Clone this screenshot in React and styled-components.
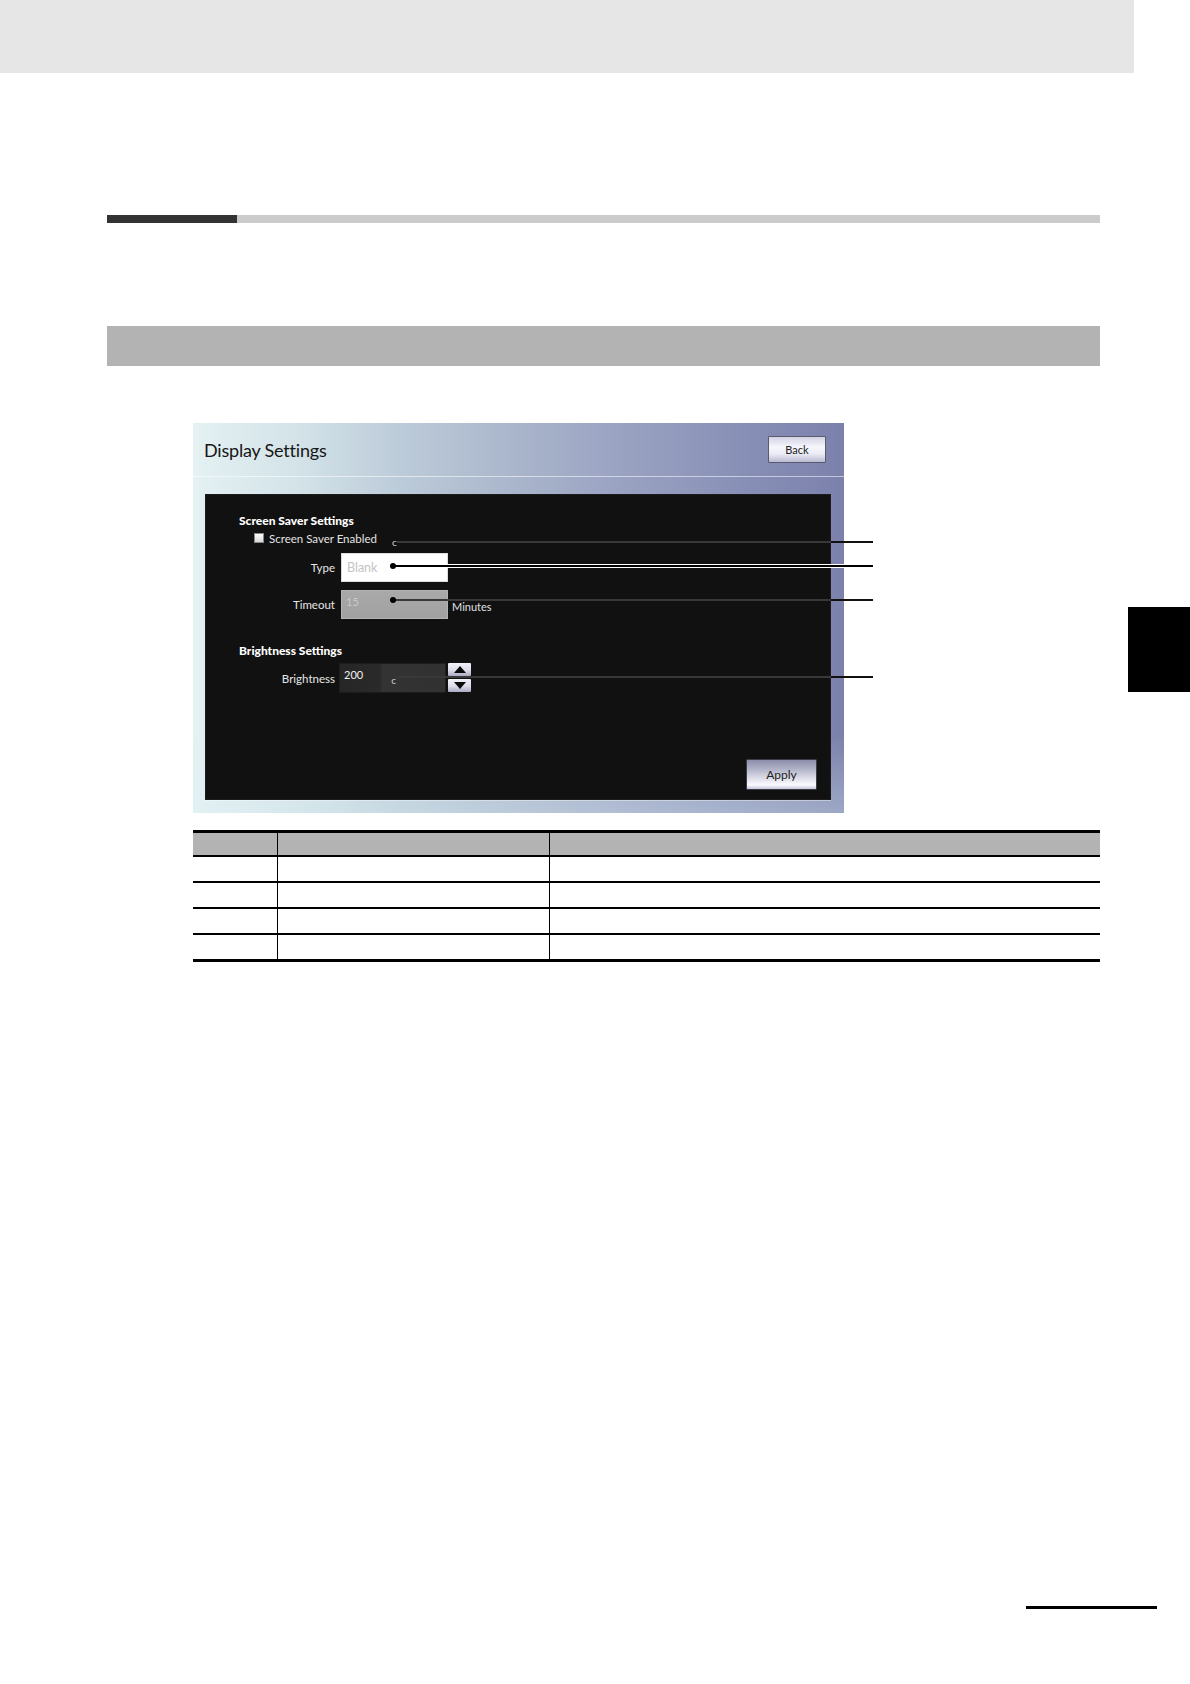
import styled, { createGlobalStyle } from 'styled-components';

const GlobalStyle = createGlobalStyle`
  html, body {
    margin: 0;
    padding: 0;
    background: #fff;
  }
  body {
    font-family: "Liberation Sans", Arial, sans-serif;
  }
`;

const Page = styled.div`
  position: relative;
  width: 1190px;
  min-height: 1684px;
  display: flex;
  flex-direction: column;
  background: #fff;
  overflow: hidden;
`;

const TopBand = styled.div`
  width: 1134px;
  height: 73px;
  background: #e6e6e6;
`;

const Content = styled.div`
  display: flex;
  flex-direction: column;
  padding: 0 90px 0 107px;
`;

const SectionRule = styled.div`
  display: flex;
  height: 8px;
  margin-top: 142px;
`;

const RuleDark = styled.div`
  width: 130px;
  background: #333;
`;

const RuleLight = styled.div`
  flex: 1;
  background: #cbcbcb;
`;

const SubBand = styled.div`
  height: 40px;
  margin-top: 103px;
  background: #b3b3b3;
`;

const ChapterTab = styled.div`
  position: absolute;
  right: 0;
  top: 607px;
  width: 62px;
  height: 85px;
  background: #000;
`;

const FooterRule = styled.div`
  align-self: flex-end;
  width: 131px;
  height: 3px;
  margin: auto 33px 75px 0;
  background: #000;
`;

/* ---------- the HMI screenshot ---------- */

const Shot = styled.div`
  position: relative;
  width: 651px;
  height: 390px;
  margin: 57px 0 0 86px;
  display: flex;
  flex-direction: column;
  font-family: Lato, "Open Sans", sans-serif;
  background:
    linear-gradient(180deg, rgba(255, 255, 255, 0) 80%, rgba(220, 240, 244, 0.35) 100%),
    linear-gradient(90deg, #e5f1f3 0%, #d3e3e8 16%, #bccbd9 32%, #a9b5cb 50%, #9aa2c2 66%, #8990b7 84%, #7b81ab 100%);
`;

const TitleBar = styled.div`
  height: 53px;
  display: flex;
  align-items: center;
  justify-content: space-between;
  padding: 0 18px 0 11px;
  border-bottom: 1px solid rgba(255, 255, 255, 0.55);
`;

const Title = styled.div`
  font-size: 18px;
  color: #161616;
  letter-spacing: -0.2px;
`;

const GlossButton = styled.div`
  width: ${(p) => p.$w}px;
  height: ${(p) => p.$h}px;
  box-sizing: border-box;
  display: flex;
  align-items: center;
  justify-content: center;
  font-size: ${(p) => p.$fs}px;
  color: #222;
  border: 1px solid ${(p) => (p.$dark ? '#3c3c48' : '#5a5a6e')};
  border-radius: 1px;
  background: ${(p) =>
    p.$dark
      ? 'linear-gradient(180deg, #8c8eaa 0%, #aeb0c6 30%, #dcdce8 62%, #fafaff 86%, #c4c4d8 100%)'
      : 'linear-gradient(180deg, #d2d2e4 0%, #f6f6fc 40%, #ebebf5 68%, #b9b9d3 100%)'};
`;

const Panel = styled.div`
  flex: 1;
  margin: 17px 13px 13px 12px;
  display: flex;
  flex-direction: column;
  padding: 19px 13px 9px 0;
  background: #111;
  border: 1px solid #1c1c1c;
  box-shadow: 0 1px 0 rgba(255, 255, 255, 0.4);
`;

const GroupTitle = styled.div`
  margin: ${(p) => p.$mt}px 0 0 33px;
  height: 14px;
  line-height: 14px;
  font-size: 12px;
  font-weight: 900;
  color: #fff;
`;

const CheckRow = styled.div`
  display: flex;
  align-items: center;
  height: 12px;
  margin: 4px 0 0 48px;
  font-size: 11.5px;
  color: #e4e4e4;
`;

const CheckBox = styled.span`
  width: 10px;
  height: 10px;
  margin-right: 5px;
  background: linear-gradient(180deg, #fff, #d8d8d8);
  border: 1px solid #888;
  box-sizing: border-box;
`;

const Marker = styled.span`
  font-size: 10px;
  color: #cfcfcf;
  margin-left: ${(p) => p.$ml}px;
  align-self: ${(p) => (p.$top ? 'flex-start' : 'flex-end')};
  margin-top: ${(p) => (p.$top ? 7 : 0)}px;
  margin-bottom: ${(p) => (p.$top ? 0 : -3)}px;
  line-height: 10px;
`;

const FieldRow = styled.div`
  display: flex;
  align-items: center;
  height: ${(p) => p.$h}px;
  margin-top: ${(p) => p.$mt}px;
`;

const FieldLabel = styled.div`
  width: 129px;
  margin-right: ${(p) => p.$gap}px;
  text-align: right;
  font-size: 11.5px;
  color: #e6e6e6;
`;

const Field = styled.div`
  width: 107px;
  height: 100%;
  box-sizing: border-box;
  display: flex;
  align-items: ${(p) => (p.$top ? 'flex-start' : 'center')};
  padding: ${(p) => (p.$top ? '4px 0 0 4px' : '0 0 0 5px')};
  font-size: ${(p) => (p.$top ? 11 : 12.5)}px;
  color: ${(p) => p.$color};
  background: ${(p) => p.$bg};
  border: 1px solid ${(p) => p.$border};
`;

const Unit = styled.div`
  margin: 4px 0 0 4px;
  font-size: 11px;
  color: #e0e0e0;
`;

const Spinner = styled.div`
  display: flex;
  flex-direction: column;
  gap: 3px;
  margin-left: 2px;
  align-self: flex-start;
`;

const SpinButton = styled.div`
  width: 23px;
  height: 13px;
  display: flex;
  align-items: center;
  justify-content: center;
  box-sizing: border-box;
  border-radius: 1px;
  background: linear-gradient(180deg, #f2f2fa 0%, #dcdcea 55%, #a9a9c4 100%);
`;

const ApplyWrap = styled.div`
  margin-top: auto;
  align-self: flex-end;
`;

/* callout leaders drawn over the screenshot */

const Leader = styled.div`
  position: absolute;
  top: ${(p) => p.$top}px;
  left: ${(p) => p.$left}px;
  width: ${(p) => 680 - p.$left}px;
  height: 2px;
  background: ${(p) =>
    p.$outlined
      ? '#000'
      : `linear-gradient(90deg, #383838 0 ${638 - p.$left}px, #111 ${638 - p.$left}px)`};
  border-top: ${(p) => (p.$outlined ? '1px solid #fff' : 'none')};
  border-bottom: ${(p) => (p.$outlined ? '1px solid #fff' : 'none')};
  transform: translateY(-50%);
`;

const LeaderDot = styled.span`
  position: absolute;
  left: -3px;
  top: 50%;
  width: 6px;
  height: 6px;
  border-radius: 50%;
  background: #000;
  transform: translateY(-50%);
`;

/* ---------- table ---------- */

const Table = styled.table`
  width: 907px;
  margin: 17px 0 0 86px;
  border-collapse: collapse;
  table-layout: fixed;
`;

const HeadCell = styled.th`
  height: 22px;
  background: #b3b3b3;
  border-top: 3px solid #000;
  border-bottom: 2px solid #000;
  border-left: ${(p) => (p.$first ? 'none' : '1px solid #000')};
  padding: 0;
`;

const Cell = styled.td`
  height: 24px;
  padding: 0;
  border-bottom: ${(p) => (p.$last ? 3 : 2)}px solid #000;
  border-left: ${(p) => (p.$first ? 'none' : '1px solid #000')};
`;

const leaders = [
  { top: 119, left: 204 },
  { top: 143, left: 200, dot: true, outlined: true },
  { top: 177, left: 200, dot: true },
  { top: 254, left: 205 },
];

function Arrow({ up }) {
  return (
    <svg width="12" height="7" viewBox="0 0 12 7">
      <path d={up ? 'M6 0 L12 7 L0 7 Z' : 'M0 0 L12 0 L6 7 Z'} fill="#0a0a0a" />
    </svg>
  );
}

function DisplaySettings() {
  return (
    <Shot>
      <TitleBar>
        <Title>Display Settings</Title>
        <GlossButton $w={58} $h={27} $fs={11}>
          Back
        </GlossButton>
      </TitleBar>
      <Panel>
        <GroupTitle $mt={0}>Screen Saver Settings</GroupTitle>
        <CheckRow>
          <CheckBox />
          Screen Saver Enabled
          <Marker $ml={15}>c</Marker>
        </CheckRow>
        <FieldRow $h={29} $mt={9}>
          <FieldLabel $gap={6}>Type</FieldLabel>
          <Field $bg="#fff" $border="#dcdcdc" $color="#c4c4c4">
            Blank
          </Field>
        </FieldRow>
        <FieldRow $h={29} $mt={8}>
          <FieldLabel $gap={6}>Timeout</FieldLabel>
          <Field
            $top
            $bg="linear-gradient(180deg, #a9a9a9, #a1a1a1)"
            $border="#b4b4b4"
            $color="#c9c9c9"
          >
            15
          </Field>
          <Unit>Minutes</Unit>
        </FieldRow>
        <GroupTitle $mt={25}>Brightness Settings</GroupTitle>
        <FieldRow $h={30} $mt={5}>
          <FieldLabel $gap={4}>Brightness</FieldLabel>
          <Field
            $top
            $bg="linear-gradient(90deg, #262626 0%, #2a2a2a 38%, #333 40%, #313131 100%)"
            $border="#1d1d1d"
            $color="#f2f2f2"
          >
            200
            <Marker $ml={28} $top>
              c
            </Marker>
          </Field>
          <Spinner>
            <SpinButton>
              <Arrow up />
            </SpinButton>
            <SpinButton>
              <Arrow />
            </SpinButton>
          </Spinner>
        </FieldRow>
        <ApplyWrap>
          <GlossButton $dark $w={71} $h={31} $fs={12}>
            Apply
          </GlossButton>
        </ApplyWrap>
      </Panel>
      {leaders.map((l, i) => (
        <Leader key={i} $top={l.top} $left={l.left} $outlined={l.outlined}>
          {l.dot && <LeaderDot />}
        </Leader>
      ))}
    </Shot>
  );
}

export default function App() {
  const rows = [0, 1, 2, 3];
  return (
    <>
      <GlobalStyle />
      <Page>
        <TopBand />
        <Content>
          <SectionRule>
            <RuleDark />
            <RuleLight />
          </SectionRule>
          <SubBand />
          <DisplaySettings />
          <Table>
            <colgroup>
              <col style={{ width: 84 }} />
              <col style={{ width: 272 }} />
              <col />
            </colgroup>
            <thead>
              <tr>
                <HeadCell $first />
                <HeadCell />
                <HeadCell />
              </tr>
            </thead>
            <tbody>
              {rows.map((r) => (
                <tr key={r}>
                  <Cell $first $last={r === rows.length - 1} />
                  <Cell $last={r === rows.length - 1} />
                  <Cell $last={r === rows.length - 1} />
                </tr>
              ))}
            </tbody>
          </Table>
        </Content>
        <ChapterTab />
        <FooterRule />
      </Page>
    </>
  );
}
